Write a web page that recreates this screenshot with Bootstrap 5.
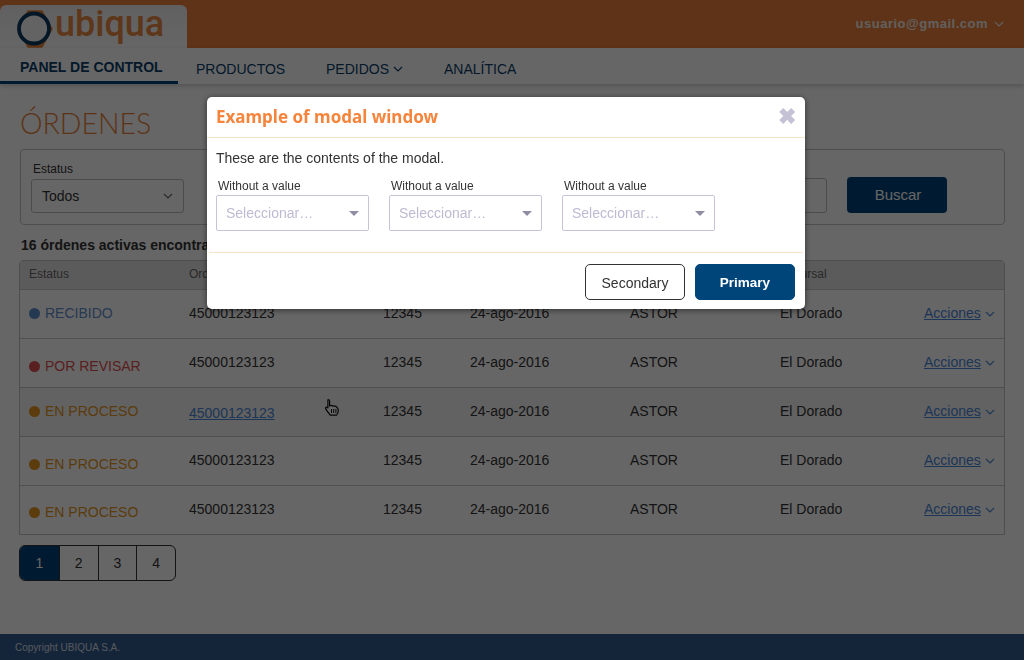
<!DOCTYPE html>
<html lang="es">
<head>
<meta charset="utf-8">
<title>Ubiqua</title>
<link href="https://cdn.jsdelivr.net/npm/bootstrap@5.3.0/dist/css/bootstrap.min.css" rel="stylesheet">
<style>
html,body{height:660px;overflow:hidden}
body{font-family:"Liberation Sans",Arial,sans-serif;font-size:14px;color:#333;background:#fff}
.page-shell{height:660px}
.top-strip{height:48px;background:#eb7f3c;padding-top:5px}
.brand-tab{width:187px;height:43px;background:linear-gradient(#f0f0f0,#fff);border-top-right-radius:6px;border-top-left-radius:6px;padding:5px 0 0 17px}
.brand-name{font-family:Roboto,sans-serif;font-weight:500;font-size:36px;line-height:40px;color:#ec8a44;margin-left:2px;margin-top:-6px}
.user-box{color:#f6f0ea;font-weight:700;font-size:13px;padding-right:20px;padding-top:6px;letter-spacing:.5px;height:31px;gap:6px}
.sub-nav{height:36px;background:#fff;box-shadow:0 2px 5px rgba(0,0,0,.2)}
.sub-link{color:#0a3e6a;font-size:14px;text-decoration:none;padding-top:11px}
.sub-link.on{width:178px;padding-top:11px;padding-left:20px;font-weight:700;border-bottom:3px solid #00457a;margin-right:18px;line-height:16px}
.page-main{padding:0 19px}
.page-title{font-family:Lato,sans-serif;font-weight:300;font-size:28.5px;line-height:36px;color:#e9803a;margin:21px 0 8px 1px}
.filter-box{height:76px;margin-left:1px;width:985px;border:1px solid #c4c4c4;border-radius:4px;padding:12px 10px}
.filter-lbl{font-size:12px;line-height:14px;margin:0 0 3px 2px;color:#333;display:block}
.filter-sel{width:153px;height:34px;border:1px solid #bbb;border-radius:3px;line-height:32px;padding:0 10px;font-size:14px}
.filter-inp{width:150px;height:35px;border:1px solid #bbb;border-radius:3px;margin-top:16px}
.find-btn{width:100px;height:36px;margin-top:15px;margin-left:20px;padding-left:8px;background:#00457a;color:#fff;border-radius:4px;font-size:15px;border:0}
.found-txt{font-weight:700;font-size:14px;margin:13px 0 7px 2px;line-height:15px}
.table.order-table{width:986px;table-layout:fixed;border-collapse:separate;border-spacing:0;margin:0;border:1px solid #c2c2c2;border-top-left-radius:4px;border-top-right-radius:4px}
.table.order-table th{height:29px;background:#e4e4e4;color:#666;font-weight:400;font-size:12px;padding:0 0 3px 9px;border-bottom:1px solid #c8c8c8;line-height:14px;vertical-align:middle}
.table.order-table td{height:49px;padding:0 0 2px 9px;vertical-align:middle;border-bottom:1px solid #c8c8c8;color:#333;font-size:14px;background:transparent;box-shadow:none}
.table.order-table tr:last-child td{border-bottom:0;height:48px}
.table.order-table tr.hov td{background:#f4f4f4}
.table.order-table td.nudge{padding:7px 0 0 9px}
.table.order-table td.nudge3{padding:5px 0 0 9px}
.table.order-table td.nudge2{padding:2px 0 0 9px}
.status-dot{width:11px;height:11px;border-radius:50%;display:inline-block;margin-right:5px;vertical-align:-1px}
.table.order-table td.st-blue{color:#5f8fd0}.st-blue .status-dot{background:#5f8fd0}
.table.order-table td.st-red{color:#dc5050}.st-red .status-dot{background:#dc5050}
.table.order-table td.st-amber{color:#e59522}.st-amber .status-dot{background:#e59522}
.blue-link{color:#4a86d8}
.pager{margin:10px 0 0;height:36px;width:157px;border:1px solid #333;border-radius:6px;overflow:hidden}
.pager-cell{width:39px;text-align:center;line-height:34px;font-size:14px;border-left:1px solid #333}
.pager-cell.first{border-left:0;width:39px;background:#00457a;color:#fff}
.foot-bar{height:26px;background:#325c91;color:#d9dee6;font-size:10px;line-height:28px;padding-left:15px;margin-top:auto}
.modal-backdrop.dimmer{opacity:.6}
.modal-dialog.demo-dialog{width:598px;max-width:598px;margin:97px auto 0 207px}
.demo-dialog .modal-content{height:212px;border:0;border-radius:5px;box-shadow:0 1px 6px rgba(0,0,0,.55)}
.demo-head{height:41px;border-bottom:1px solid #f8e3c8;padding:0 9px}
.demo-title{font-family:"Noto Sans",sans-serif;font-weight:700;font-size:17px;color:#f5843c;line-height:40px}
.demo-x{font-size:22px;font-weight:700;color:#c4c2d4;line-height:40px;margin-right:0}
.demo-body{padding:12px 9px 0 7px;height:115px;margin:0 2px;border-bottom:1px solid #f8e3c8}
.demo-body p{margin:0 0 12px;line-height:17px;font-size:14px;color:#333}
.demo-lbl{display:block;font-size:12px;line-height:14px;margin:0 0 2px 2px;color:#333}
.demo-sel{width:153px;height:36px;border:1px solid #c6c4d8;border-radius:2px;line-height:34px;padding:0 10px 0 9px;color:#bdbbd2;font-size:14px}
.demo-caret{width:0;height:0;border-left:5px solid transparent;border-right:5px solid transparent;border-top:5px solid #8f8da4;margin-right:-1px}
.demo-foot{padding:11px 10px 0 0;gap:10px}
.demo-btn{width:100px;height:36px;border-radius:5px;font-size:14px;padding:2px 0 0}
.demo-btn.sec{background:#fff;border:1px solid #333;color:#333}
.demo-btn.pri{background:#00457a;border:1px solid #00457a;color:#fff;font-weight:700;font-size:13.5px}
.hand-cursor{position:absolute;left:324px;top:398px;width:17px;height:19px;z-index:1}
</style>
</head>
<body>
<div class="page-shell d-flex flex-column">
  <div class="top-strip d-flex justify-content-between">
    <div class="brand-tab d-flex align-items-start">
      <svg width="36" height="38" viewBox="0 0 36 38" class="flex-shrink-0" aria-hidden="true"><polygon points="11,1 25,1 35,19 25,37 11,37 1,19" fill="#e98237" stroke="#e98237" stroke-linejoin="round" stroke-width="1.500"/><circle cx="17" cy="18.500" r="15" fill="#f8f8f8" stroke="#0a3b63" stroke-width="3.800"/></svg>
      <div class="brand-name">ubiqua</div>
    </div>
    <div class="user-box d-flex align-items-center">usuario@gmail.com <svg width="10" height="6" viewBox="0 0 10 6"><path d="M1 1l4 4 4-4" fill="none" stroke="#f6f0ea" stroke-width="1.1"/></svg></div>
  </div>
  <div class="sub-nav d-flex">
    <a class="sub-link on" href="#">PANEL DE CONTROL</a>
    <a class="sub-link" href="#" style="width:130px">PRODUCTOS</a>
    <a class="sub-link" href="#" style="width:118px">PEDIDOS <svg width="10" height="6" viewBox="0 0 10 6" style="vertical-align:2px"><path d="M1 1l4 4 4-4" fill="none" stroke="#0a3e6a" stroke-width="1.2"/></svg></a>
    <a class="sub-link" href="#">ANALÍTICA</a>
  </div>
  <div class="page-main">
    <h1 class="page-title">ÓRDENES</h1>
    <div class="filter-box d-flex">
      <div><label class="filter-lbl">Estatus</label><div class="filter-sel d-flex justify-content-between align-items-center">Todos <svg width="10" height="6" viewBox="0 0 10 6"><path d="M1 1l4 4 4-4" fill="none" stroke="#666" stroke-width="1.1"/></svg></div></div>
      <div class="ms-auto d-flex"><div class="filter-inp"></div><button class="find-btn" type="button">Buscar</button><div style="width:47px"></div></div>
    </div>
    <div class="found-txt">16 órdenes activas encontradas</div>
    <table class="table order-table">
      <colgroup><col style="width:160px"><col style="width:194px"><col style="width:87px"><col style="width:160px"><col style="width:150px"><col style="width:144px"><col></colgroup>
      <thead><tr><th>Estatus</th><th>Orden</th><th></th><th></th><th></th><th>Sucursal</th><th></th></tr></thead>
      <tbody>
        <tr><td class="st-blue"><span class="status-dot"></span>RECIBIDO</td><td>45000123123</td><td>12345</td><td>24-ago-2016</td><td>ASTOR</td><td>El Dorado</td><td><a class="blue-link" href="#">Acciones</a> <svg width="10" height="6" viewBox="0 0 10 6"><path d="M1 1l4 4 4-4" fill="none" stroke="#4a86d8" stroke-width="1.1"/></svg></td></tr>
        <tr><td class="st-red nudge"><span class="status-dot"></span>POR REVISAR</td><td>45000123123</td><td>12345</td><td>24-ago-2016</td><td>ASTOR</td><td>El Dorado</td><td><a class="blue-link" href="#">Acciones</a> <svg width="10" height="6" viewBox="0 0 10 6"><path d="M1 1l4 4 4-4" fill="none" stroke="#4a86d8" stroke-width="1.1"/></svg></td></tr>
        <tr class="hov"><td class="st-amber"><span class="status-dot"></span>EN PROCESO</td><td class="nudge2"><a class="blue-link" href="#">45000123123</a></td><td>12345</td><td>24-ago-2016</td><td>ASTOR</td><td>El Dorado</td><td><a class="blue-link" href="#">Acciones</a> <svg width="10" height="6" viewBox="0 0 10 6"><path d="M1 1l4 4 4-4" fill="none" stroke="#4a86d8" stroke-width="1.1"/></svg></td></tr>
        <tr><td class="st-amber nudge"><span class="status-dot"></span>EN PROCESO</td><td>45000123123</td><td>12345</td><td>24-ago-2016</td><td>ASTOR</td><td>El Dorado</td><td><a class="blue-link" href="#">Acciones</a> <svg width="10" height="6" viewBox="0 0 10 6"><path d="M1 1l4 4 4-4" fill="none" stroke="#4a86d8" stroke-width="1.1"/></svg></td></tr>
        <tr><td class="st-amber nudge3"><span class="status-dot"></span>EN PROCESO</td><td>45000123123</td><td>12345</td><td>24-ago-2016</td><td>ASTOR</td><td>El Dorado</td><td><a class="blue-link" href="#">Acciones</a> <svg width="10" height="6" viewBox="0 0 10 6"><path d="M1 1l4 4 4-4" fill="none" stroke="#4a86d8" stroke-width="1.1"/></svg></td></tr>
      </tbody>
    </table>
    <div class="pager d-flex">
      <div class="pager-cell first">1</div><div class="pager-cell">2</div><div class="pager-cell">3</div><div class="pager-cell">4</div>
    </div>
  </div>
  <div class="foot-bar">Copyright UBIQUA S.A.</div>
</div>
<svg class="hand-cursor" viewBox="0 0 17 19" aria-hidden="true"><path d="M4 1.500c1 0 1.600.7 1.600 1.600V8l1.200-.5c.8-.2 1.400 0 1.800.6.7-.4 1.400-.3 1.900.3.8-.4 1.600-.2 2 .4l1.200 1.600c.5.7.6 1.400.6 2.200 0 2-.8 3.600-1.800 4.600H6.300C5 15.600 3 13 1.600 10.600c-.5-.9.5-2 1.500-1.300l.8.6V3.100c0-1 .1-1.600.1-1.600z" fill="#fff" stroke="#111" stroke-width="1.200" stroke-linejoin="round"/><path d="M7.500 11v4M9.700 11v4M11.900 11v4" stroke="#111" stroke-width="1"/></svg>
<div class="modal-backdrop dimmer"></div>
<div class="modal d-block" role="dialog">
  <div class="modal-dialog demo-dialog">
    <div class="modal-content">
      <div class="demo-head d-flex justify-content-between align-items-start">
        <div class="demo-title">Example of modal window</div>
        <div class="demo-x">✖</div>
      </div>
      <div class="demo-body">
        <p>These are the contents of the modal.</p>
        <div class="d-flex" style="gap:20px">
          <div><label class="demo-lbl">Without a value</label><div class="demo-sel d-flex justify-content-between align-items-center">Seleccionar… <span class="demo-caret"></span></div></div>
          <div><label class="demo-lbl">Without a value</label><div class="demo-sel d-flex justify-content-between align-items-center">Seleccionar… <span class="demo-caret"></span></div></div>
          <div><label class="demo-lbl">Without a value</label><div class="demo-sel d-flex justify-content-between align-items-center">Seleccionar… <span class="demo-caret"></span></div></div>
        </div>
      </div>
      <div class="demo-foot d-flex justify-content-end">
        <button class="btn demo-btn sec" type="button">Secondary</button>
        <button class="btn demo-btn pri" type="button">Primary</button>
      </div>
    </div>
  </div>
</div>
<script src="https://cdn.jsdelivr.net/npm/bootstrap@5.3.0/dist/js/bootstrap.bundle.min.js"></script>
</body>
</html>
